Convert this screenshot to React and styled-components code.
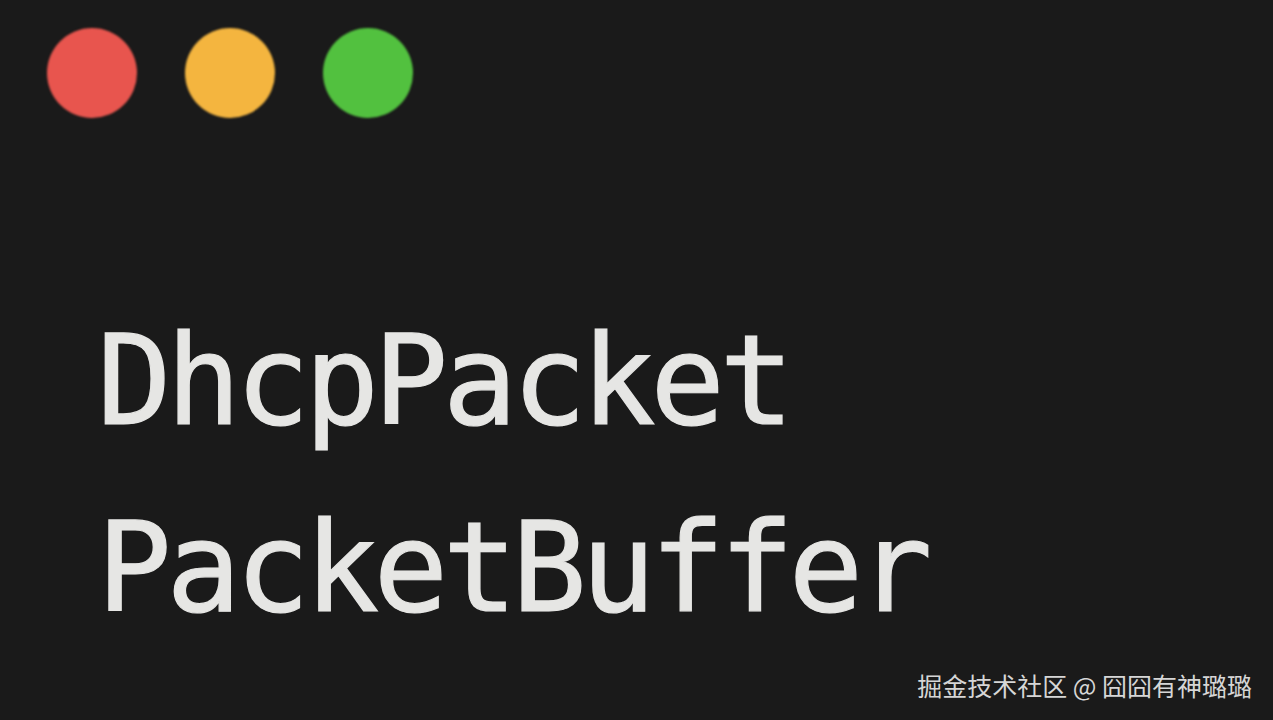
import React from "react";
import styled, { createGlobalStyle } from "styled-components";

const GlobalStyle = createGlobalStyle`
  html, body {
    margin: 0;
    padding: 0;
    background-color: #1a1a1a;
  }
`;

const Window = styled.div`
  position: relative;
  width: 1273px;
  height: 720px;
  overflow: hidden;
  background-color: #1a1a1a;
  box-sizing: border-box;
  padding: 28px 0 0 47px;
  display: flex;
  flex-direction: column;
`;

const Controls = styled.div`
  display: flex;
  flex-direction: row;
  gap: 48px;
`;

const Dot = styled.span`
  width: 90px;
  height: 90px;
  border-radius: 50%;
  background-color: ${(p) => p.color};
  filter: blur(0.8px);
`;

const Code = styled.div`
  margin-top: 170px;
  padding-left: 50px;
  display: flex;
  flex-direction: column;
`;

const Line = styled.div`
  font-family: "DejaVu Sans Mono", monospace;
  font-size: 124px;
  line-height: 187px;
  letter-spacing: -5.5px;
  color: #e6e6e4;
  white-space: pre;
  -webkit-text-stroke: 1.2px #e6e6e4;
  filter: blur(0.7px);
`;

const Watermark = styled.div`
  position: absolute;
  right: 21px;
  bottom: 20px;
  font-family: "Noto Sans CJK SC", sans-serif;
  font-size: 25px;
  line-height: 30px;
  color: #d6d6d6;
`;

const App = () => {
  return (
    <Window>
      <GlobalStyle />
      <Controls>
        <Dot color="#e8554e" />
        <Dot color="#f4b53f" />
        <Dot color="#52c13f" />
      </Controls>
      <Code>
        <Line>DhcpPacket</Line>
        <Line>PacketBuffer</Line>
      </Code>
      <Watermark>掘金技术社区 @ 囧囧有神璐璐</Watermark>
    </Window>
  );
};

export default App;
